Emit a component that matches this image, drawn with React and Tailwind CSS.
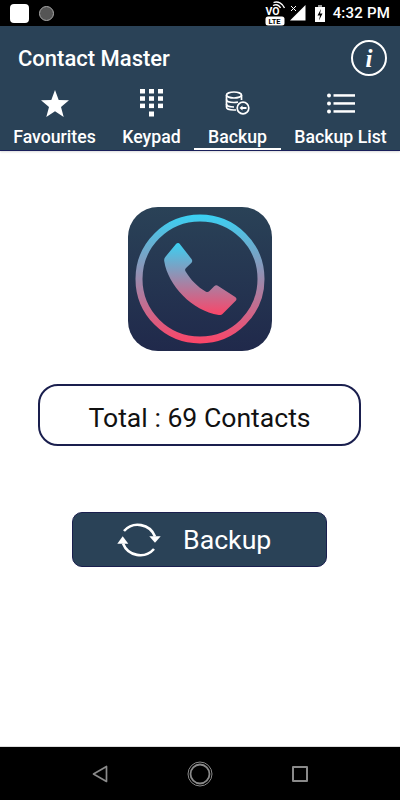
import React from "react";

const tabs = [
  { label: "Favourites", icon: <StarIcon /> },
  { label: "Keypad", icon: <KeypadIcon /> },
  { label: "Backup", icon: <DatabaseIcon />, active: true },
  { label: "Backup List", icon: <ListIcon /> },
];

function StarIcon() {
  return (
    <svg width="28" height="27" viewBox="0 0 28 27" fill="#fff">
      <path d="M14 0l3.700 9.900L28 10.300l-8 6.600 2.700 10.100L14 21.300 5.300 27 8 16.900 0 10.300l10.300-.4z" />
    </svg>
  );
}

function KeypadIcon() {
  const cells = [];
  for (let r = 0; r < 3; r++) {
    for (let c = 0; c < 3; c++) {
      cells.push(<rect key={r + "-" + c} x={c * 9} y={r * 7.3} width="5" height="4.500" fill="#fff" />);
    }
  }
  return (
    <svg width="23" height="28" viewBox="0 0 23 28">
      {cells}
      <rect x="9" y="22.500" width="5" height="5" fill="#fff" />
    </svg>
  );
}

function DatabaseIcon() {
  return (
    <svg width="25" height="24" viewBox="0 0 25 24" fill="none" stroke="#fff" strokeWidth="1.700">
      <ellipse cx="9" cy="4" rx="7.500" ry="3" />
      <path d="M1.500 4v12c0 1.700 3.200 3 7.500 3h2" />
      <path d="M16.500 4v5" />
      <path d="M1.500 8.500c0 1.700 3.200 3 7.500 3 1.500 0 3-.2 4-.5" />
      <path d="M1.500 13c0 1.700 3.200 3 7.500 3" />
      <circle cx="18" cy="17" r="5.800" />
      <path d="M17 17h4.500" strokeWidth="2" />
      <path d="M14.500 17l3-2.500v5z" fill="#fff" stroke="none" />
    </svg>
  );
}

function ListIcon() {
  return (
    <svg width="28" height="21" viewBox="0 0 28 21" fill="#fff">
      <circle cx="2" cy="2.500" r="2" />
      <circle cx="2" cy="10.500" r="2" />
      <circle cx="2" cy="18.500" r="2" />
      <rect x="6.500" y="1.200" width="21.500" height="2.500" />
      <rect x="6.500" y="9.200" width="21.500" height="2.500" />
      <rect x="6.500" y="17.200" width="21.500" height="2.500" />
    </svg>
  );
}

function AppLogo() {
  return (
    <svg width="144" height="144" viewBox="0 0 144 144">
      <defs>
        <linearGradient id="tile" x1="0" y1="0" x2="0" y2="1">
          <stop offset="0" stopColor="#2a4257" />
          <stop offset="1" stopColor="#20294b" />
        </linearGradient>
        <linearGradient id="ring" gradientUnits="userSpaceOnUse" x1="0" y1="8" x2="0" y2="136">
          <stop offset="0" stopColor="#3ad0f2" />
          <stop offset="1" stopColor="#fb4568" />
        </linearGradient>
        <linearGradient id="phone" gradientUnits="userSpaceOnUse" x1="0" y1="36" x2="0" y2="108">
          <stop offset="0" stopColor="#3ad0f2" />
          <stop offset="1" stopColor="#fb4568" />
        </linearGradient>
      </defs>
      <rect width="144" height="144" rx="30" fill="url(#tile)" />
      <circle cx="72" cy="72" r="61" fill="none" stroke="url(#ring)" strokeWidth="7" />
      <path
        d="M48 37c1.300-1.200 3-1.200 4 .2L63.500 52c1 1.300 1 2.800-.2 4l-5.300 5c-1 1-1.200 2-.5 3.200 5 8.500 12 15.500 20.500 20.500 1.200.7 2.300.5 3.200-.4l5-5c1.200-1.200 2.700-1.300 4-.3l17 11c1.500 1 1.700 2.500.5 3.800L95 106.500c-1.200 1.200-2.500 1.700-4.200 1.500C64 104 40 78 36.300 54.500c-.4-2 0-3.500 1.200-4.800z"
        fill="url(#phone)"
      />
    </svg>
  );
}

function StatusBar() {
  return (
    <div className="h-[26px] bg-black flex items-center pl-[10px] pr-[10px] shrink-0">
      <div className="w-[19px] h-[19px] bg-white rounded-[4px]" />
      <div className="w-[15px] h-[15px] rounded-full bg-[#555] border border-[#aaa] ml-[10px]" />
      <div className="ml-auto flex items-center">
        <svg width="20" height="25" viewBox="0 0 20 25" fill="none" className="mr-[5px]">
          <text x="0.500" y="14" fontSize="10.500" fontWeight="700" fill="#fff" fontFamily="Roboto, sans-serif">VO</text>
          <path d="M8 4.500c3-1.500 6-.5 7.500 2.500M8.500 1.500c4.500-1.500 9 .5 11 5.500" stroke="#fff" strokeWidth="1.300" />
          <rect x="0.500" y="15.500" width="19" height="9" rx="2.500" fill="#fff" />
          <text x="3.500" y="23" fontSize="7.500" fontWeight="700" fill="#000" fontFamily="Roboto, sans-serif">LTE</text>
        </svg>
        <svg width="16" height="16" viewBox="0 0 16 16" className="mr-[9px]">
          <path d="M15.500 0v15.500H0z" fill="#fff" />
          <path d="M1 1l5 5M6 1L1 6" stroke="#fff" strokeWidth="1" />
        </svg>
        <svg width="10" height="17" viewBox="0 0 10 17" className="mr-[8px]">
          <rect x="3" y="0" width="4" height="2" fill="#999" />
          <rect x="0" y="2" width="10" height="15" fill="#fff" />
          <path d="M6 4L2.500 10.500H5l-1 5 3.500-7H5z" fill="#000" />
        </svg>
        <span className="text-white text-[15px] font-medium font-['Roboto',sans-serif] tracking-[0.2px]">4:32 PM</span>
      </div>
    </div>
  );
}

function Header() {
  return (
    <div className="relative h-[125px] bg-[#2a4257] flex flex-col shrink-0 border-b border-[#1a1f5a] shadow-[0_1px_2px_rgba(0,0,0,0.15)]">
      <div className="h-[62px] flex items-center justify-between pl-[18px] pr-[13px]">
        <span className="text-white text-[22px] font-medium font-['Roboto',sans-serif] pt-[3px]">Contact Master</span>
        <div className="w-[36px] h-[36px] rounded-full border-2 border-white flex items-center justify-center mt-[3px]">
          <span className="text-white text-[25px] italic font-bold font-['Liberation_Serif',serif] leading-none">i</span>
        </div>
      </div>
      <div className="flex-1 grid grid-cols-[109px_85px_87px_119px]">
        {tabs.map((t) => (
          <div
            key={t.label}
            className={
              "flex flex-col items-center border-b-2 " +
              (t.active ? "border-white" : "border-transparent")
            }
          >
            <div className="h-[32px] flex items-center justify-center">{t.icon}</div>
            <span className="text-white text-[17.700px] font-medium font-['Roboto',sans-serif] leading-[21px] mt-[8px] whitespace-nowrap">
              {t.label}
            </span>
          </div>
        ))}
      </div>
    </div>
  );
}

function SyncIcon() {
  return (
    <svg width="46" height="40" viewBox="0 0 46 40" fill="none">
      <path d="M8 11A18.500 18.500 0 0 1 39 16.500" stroke="#fff" strokeWidth="2.600" />
      <path d="M38 29A18.500 18.500 0 0 1 7 23.500" stroke="#fff" strokeWidth="2.600" />
      <path d="M33.300 16.300h11.400L39 22.700z" fill="#fff" />
      <path d="M1.300 23.700h11L6.700 16.300z" fill="#fff" />
    </svg>
  );
}

function NavBar() {
  return (
    <div className="h-[54px] bg-black flex items-center justify-center gap-[79px] shrink-0 border-t border-[#ddd]">
      <svg width="16" height="18" viewBox="0 0 16 18" fill="none" stroke="#8a8a8a" strokeWidth="1.700">
        <path d="M14.500 1.500v15L1.500 9z" strokeLinejoin="round" />
      </svg>
      <svg width="26" height="26" viewBox="0 0 26 26" fill="none" stroke="#8a8a8a">
        <circle cx="13" cy="13" r="12" strokeWidth="1" />
        <circle cx="13" cy="13" r="9.500" strokeWidth="1.800" />
      </svg>
      <div className="w-[16px] h-[16px] border-2 border-[#8a8a8a] rounded-[1px]" />
    </div>
  );
}

export default function App() {
  return (
    <div className="w-[400px] h-[800px] flex flex-col bg-white overflow-hidden font-['Roboto',sans-serif]">
      <StatusBar />
      <Header />
      <div className="flex-1 flex flex-col items-center pt-[56px]">
        <AppLogo />
        <div className="w-[323px] h-[62px] mt-[33px] ml-[-1px] pt-[5px] rounded-[20px] border-2 border-[#1a1f4e] flex items-center justify-center text-[26.600px] text-[#111]">
          Total : 69 Contacts
        </div>
        <button className="w-[255px] h-[55px] mt-[66px] ml-[-1px] rounded-[10px] bg-[#2a4257] border border-[#1a1f4e] flex items-center pl-[43px]">
          <SyncIcon />
          <span className="text-white text-[26.700px] ml-[21px] pt-[1px]">Backup</span>
        </button>
      </div>
      <NavBar />
    </div>
  );
}
